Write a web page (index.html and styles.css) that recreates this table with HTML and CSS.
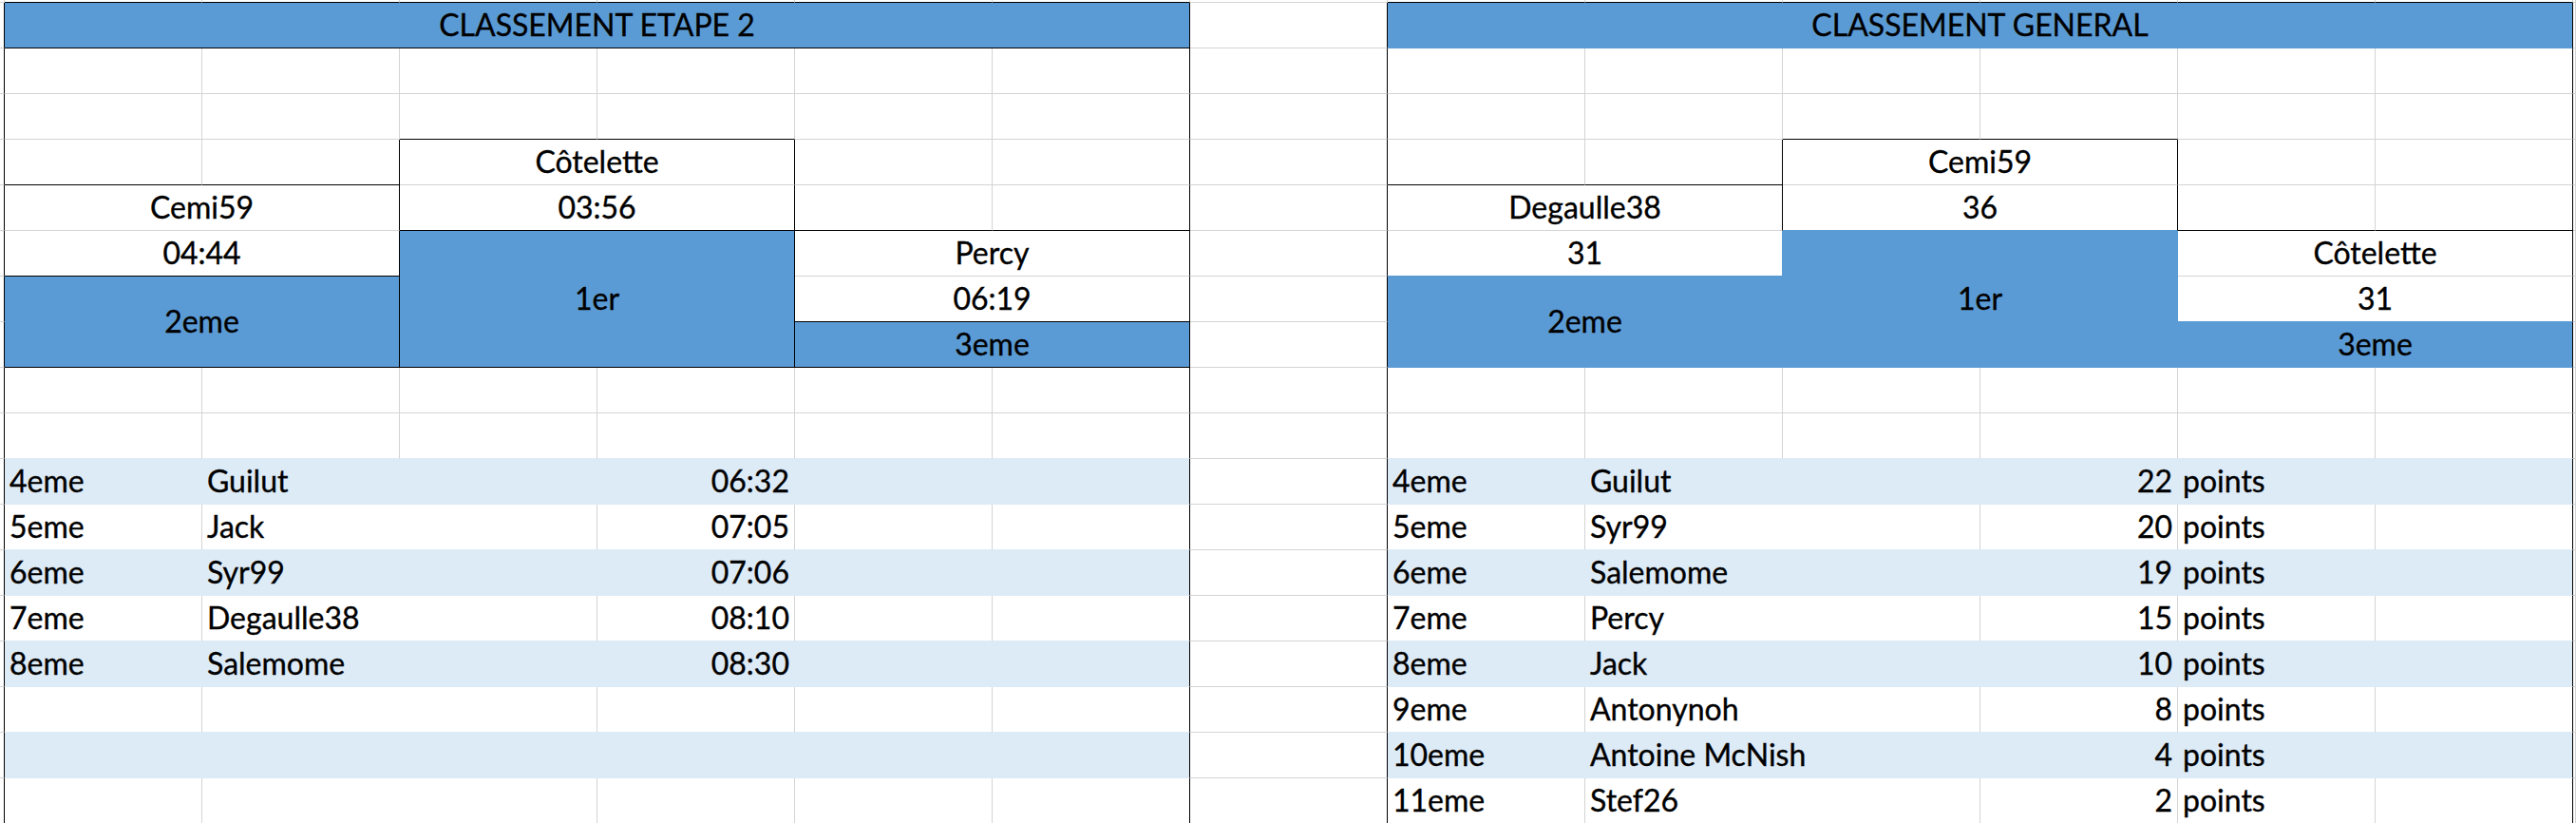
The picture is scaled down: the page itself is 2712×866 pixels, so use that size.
FILE: index.html
```html
<!DOCTYPE html>
<html lang="fr">
<head>
    <meta charset="UTF-8">
    <title>Classements</title>
    <link rel="stylesheet" href="styles.css">
</head>
<body>
    <table class="sheet">
        <colgroup>
            <col class="edge-col">
            <col span="13" class="cell-col">
            <col class="tail-col">
        </colgroup>
        <!-- strip above the headers -->
        <tr class="top">
            <td></td><td class="bb"></td><td class="bb"></td><td class="bb"></td><td class="bb"></td><td class="bb"></td><td class="bb"></td>
            <td></td><td class="bb"></td><td class="bb"></td><td class="bb"></td><td class="bb"></td><td class="bb"></td><td class="bb"></td><td></td>
        </tr>
        <tr>
            <td class="rb"></td>
            <td class="head rb bb" colspan="6">CLASSEMENT ETAPE 2</td>
            <td class="rb"></td>
            <td class="head rb" colspan="6">CLASSEMENT GENERAL</td>
            <td></td>
        </tr>
        <tr>
            <td class="rb"></td><td></td><td></td><td></td><td></td><td></td><td class="rb"></td>
            <td class="rb"></td><td></td><td></td><td></td><td></td><td></td><td class="rb"></td><td></td>
        </tr>
        <tr>
            <td class="rb"></td><td></td><td></td><td class="bb"></td><td class="bb"></td><td></td><td class="rb"></td>
            <td class="rb"></td><td></td><td></td><td class="bb"></td><td class="bb"></td><td></td><td class="rb"></td><td></td>
        </tr>

        <!-- podiums -->
        <tr>
            <td class="rb"></td><td class="bb"></td><td class="bb rb"></td>
            <td class="box rb" colspan="2">Côtelette</td>
            <td></td><td class="rb"></td>
            <td class="rb"></td><td class="bb"></td><td class="bb rb"></td>
            <td class="box rb" colspan="2">Cemi59</td>
            <td></td><td class="rb"></td><td></td>
        </tr>
        <tr>
            <td class="rb"></td>
            <td class="box rb" colspan="2">Cemi59</td>
            <td class="box rb bb" colspan="2">03:56</td>
            <td class="bb"></td><td class="bb rb"></td>
            <td class="rb"></td>
            <td class="box rb" colspan="2">Degaulle38</td>
            <td class="box rb fill-b" colspan="2">36</td>
            <td class="bb"></td><td class="bb rb"></td><td></td>
        </tr>
        <tr>
            <td class="rb"></td>
            <td class="box rb bb" colspan="2">04:44</td>
            <td class="podium rb bb" colspan="2" rowspan="3">1er</td>
            <td class="box rb" colspan="2">Percy</td>
            <td class="rb"></td>
            <td class="box fill-r fill-b" colspan="2">31</td>
            <td class="podium" colspan="2" rowspan="3">1er</td>
            <td class="box rb" colspan="2">Côtelette</td>
            <td></td>
        </tr>
        <tr>
            <td class="rb"></td>
            <td class="podium rb bb" colspan="2" rowspan="2">2eme</td>
            <td class="box rb bb" colspan="2">06:19</td>
            <td class="rb"></td>
            <td class="podium" colspan="2" rowspan="2">2eme</td>
            <td class="box rb fill-b" colspan="2">31</td>
            <td></td>
        </tr>
        <tr>
            <td class="rb"></td>
            <td class="podium rb bb" colspan="2">3eme</td>
            <td class="rb"></td>
            <td class="podium rb" colspan="2">3eme</td>
            <td></td>
        </tr>

        <tr>
            <td class="rb"></td><td></td><td></td><td></td><td></td><td></td><td class="rb"></td>
            <td class="rb"></td><td></td><td></td><td></td><td></td><td></td><td class="rb"></td><td></td>
        </tr>
        <tr>
            <td class="rb"></td><td class="fade"></td><td class="fade"></td><td class="fade"></td><td class="fade"></td><td class="fade"></td><td class="fade rb"></td>
            <td class="rb"></td><td class="fade"></td><td class="fade"></td><td class="fade"></td><td class="fade"></td><td class="fade"></td><td class="fade rb"></td><td></td>
        </tr>

        <!-- rankings from 4th place -->
        <tr>
            <td class="rb"></td>
            <td class="band">4eme</td><td class="band" colspan="2">Guilut</td><td class="band num">06:32</td><td class="band"></td><td class="band rb"></td>
            <td class="rb"></td>
            <td class="band">4eme</td><td class="band" colspan="2">Guilut</td><td class="band num">22</td><td class="band">points</td><td class="band rb"></td>
            <td></td>
        </tr>
        <tr>
            <td class="rb"></td>
            <td class="fade">5eme</td><td class="fade" colspan="2">Jack</td><td class="fade num">07:05</td><td class="fade"></td><td class="fade rb"></td>
            <td class="rb"></td>
            <td class="fade">5eme</td><td class="fade" colspan="2">Syr99</td><td class="fade num">20</td><td class="fade">points</td><td class="fade rb"></td>
            <td></td>
        </tr>
        <tr>
            <td class="rb"></td>
            <td class="band">6eme</td><td class="band" colspan="2">Syr99</td><td class="band num">07:06</td><td class="band"></td><td class="band rb"></td>
            <td class="rb"></td>
            <td class="band">6eme</td><td class="band" colspan="2">Salemome</td><td class="band num">19</td><td class="band">points</td><td class="band rb"></td>
            <td></td>
        </tr>
        <tr>
            <td class="rb"></td>
            <td class="fade">7eme</td><td class="fade" colspan="2">Degaulle38</td><td class="fade num">08:10</td><td class="fade"></td><td class="fade rb"></td>
            <td class="rb"></td>
            <td class="fade">7eme</td><td class="fade" colspan="2">Percy</td><td class="fade num">15</td><td class="fade">points</td><td class="fade rb"></td>
            <td></td>
        </tr>
        <tr>
            <td class="rb"></td>
            <td class="band">8eme</td><td class="band" colspan="2">Salemome</td><td class="band num">08:30</td><td class="band"></td><td class="band rb"></td>
            <td class="rb"></td>
            <td class="band">8eme</td><td class="band" colspan="2">Jack</td><td class="band num">10</td><td class="band">points</td><td class="band rb"></td>
            <td></td>
        </tr>
        <tr>
            <td class="rb"></td>
            <td class="fade"></td><td class="fade" colspan="2"></td><td class="fade num"></td><td class="fade"></td><td class="fade rb"></td>
            <td class="rb"></td>
            <td class="fade">9eme</td><td class="fade" colspan="2">Antonynoh</td><td class="fade num">8</td><td class="fade">points</td><td class="fade rb"></td>
            <td></td>
        </tr>
        <tr>
            <td class="rb"></td>
            <td class="band"></td><td class="band" colspan="2"></td><td class="band num"></td><td class="band"></td><td class="band rb"></td>
            <td class="rb"></td>
            <td class="band">10eme</td><td class="band" colspan="2">Antoine McNish</td><td class="band num">4</td><td class="band">points</td><td class="band rb"></td>
            <td></td>
        </tr>
        <tr>
            <td class="rb"></td>
            <td class="fade"></td><td class="fade" colspan="2"></td><td class="fade num"></td><td class="fade"></td><td class="fade rb"></td>
            <td class="rb"></td>
            <td class="fade">11eme</td><td class="fade" colspan="2">Stef26</td><td class="fade num">2</td><td class="fade">points</td><td class="fade rb"></td>
            <td></td>
        </tr>
    </table>
</body>
</html>
```

FILE: styles.css
```css
body {
    margin: 0;
    background: #fff;
    overflow: hidden;
}
.sheet {
    width: 2712px;
    table-layout: fixed;
    border-collapse: separate;
    border-spacing: 0;
    font-family: Lato, "Liberation Sans", sans-serif;
    font-size: 32px;
    color: #000;
    -webkit-text-stroke: 0.35px #000;
}
.edge-col {
    width: 5px;
}
.cell-col {
    width: 208px;
}
.tail-col {
    width: 3px;
}
td {
    box-sizing: border-box;
    height: 48px;
    padding: 0 5px;
    border-right: 1px solid #d4d4d4;
    border-bottom: 1px solid #d4d4d4;
    line-height: 1.2;
    white-space: nowrap;
    overflow: hidden;
    vertical-align: middle;
}
.top td {
    height: 3px;
}
td:first-child,
td:last-child {
    padding: 0;
}
.head,
.podium {
    background: #5b9bd5;
    border-color: #5b9bd5;
    text-align: center;
}
.box {
    text-align: center;
}
.num {
    text-align: right;
}
.band {
    background: #ddebf7;
    border-color: #ddebf7;
}
.fade {
    border-bottom-color: #ddebf7;
}
.fill-r {
    border-right-color: #5b9bd5;
}
.fill-b {
    border-bottom-color: #5b9bd5;
}
.rb {
    border-right-color: #000;
}
.bb {
    border-bottom-color: #000;
}
```
